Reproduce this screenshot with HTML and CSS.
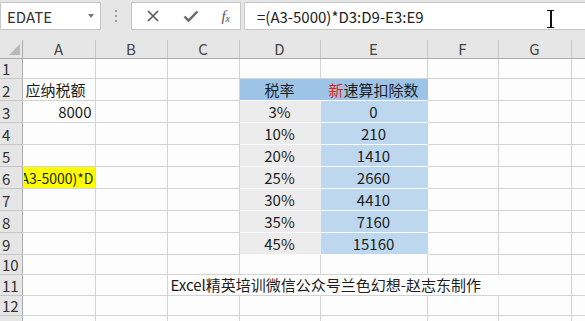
FILE: index.html
```html
<!DOCTYPE html>
<html lang="zh-CN">
<head>
  <meta charset="UTF-8" />
  <title>EDATE</title>
  <link rel="stylesheet" href="styles.css">
</head>
<body>
  <div class="formula-bar">
    <div class="namebox">
      <span class="name">EDATE</span>
      <span class="caret"></span>
    </div>
    <div class="grip"><i></i><i></i><i></i></div>
    <div class="actions">
      <svg class="icon" width="14" height="14" viewBox="0 0 14 14"><path d="M2 2 L12 12 M12 2 L2 12" stroke="#555" stroke-width="1.6" fill="none"/></svg>
      <svg class="icon" width="16" height="14" viewBox="0 0 16 14"><path d="M1.5 7.5 L5.5 11.5 L14.5 2.5" stroke="#666" stroke-width="2.4" fill="none"/></svg>
      <span class="fx">f<sub>x</sub></span>
    </div>
    <div class="formula">
      <span class="formula-text">=(A3-5000)*D3:D9-E3:E9</span>
      <span class="ibeam"></span>
    </div>
  </div>

  <table class="sheet">
    <colgroup>
      <col class="w-rh"><col class="w-a"><col class="w-b"><col class="w-c"><col class="w-d"><col class="w-e"><col class="w-f"><col class="w-g"><col class="w-h">
    </colgroup>
    <tr class="col-head">
      <th class="corner"><span class="tri"></span></th><th>A</th><th>B</th><th>C</th><th>D</th><th>E</th><th>F</th><th>G</th><th></th>
    </tr>
    <tr class="short"><th>1</th><td></td><td></td><td></td><td></td><td></td><td></td><td></td><td></td></tr>
    <tr class="tall"><th>2</th><td>应纳税额</td><td></td><td></td><td class="head-blue center">税率</td><td class="head-blue center"><span class="red">新</span>速算扣除数</td><td></td><td></td><td></td></tr>
    <tr class="tall"><th>3</th><td class="num">8000</td><td></td><td></td><td class="rate">3%</td><td class="quick">0</td><td></td><td></td><td></td></tr>
    <tr class="tall"><th>4</th><td></td><td></td><td></td><td class="rate">10%</td><td class="quick">210</td><td></td><td></td><td></td></tr>
    <tr class="tall"><th>5</th><td></td><td></td><td></td><td class="rate">20%</td><td class="quick">1410</td><td></td><td></td><td></td></tr>
    <tr class="tall"><th>6</th><td class="editing"><div class="clip"><span>=(A3-5000)*D</span></div></td><td></td><td></td><td class="rate">25%</td><td class="quick">2660</td><td></td><td></td><td></td></tr>
    <tr class="tall"><th>7</th><td></td><td></td><td></td><td class="rate">30%</td><td class="quick">4410</td><td></td><td></td><td></td></tr>
    <tr class="tall"><th>8</th><td></td><td></td><td></td><td class="rate">35%</td><td class="quick">7160</td><td></td><td></td><td></td></tr>
    <tr class="tall"><th>9</th><td></td><td></td><td></td><td class="rate">45%</td><td class="quick">15160</td><td></td><td></td><td></td></tr>
    <tr class="short"><th>10</th><td></td><td></td><td></td><td></td><td></td><td></td><td></td><td></td></tr>
    <tr class="mid"><th>11</th><td></td><td></td><td class="note"><span>Excel精英培训微信公众号兰色幻想-赵志东制作</span></td><td class="covered"></td><td class="covered"></td><td class="covered"></td><td></td><td></td></tr>
    <tr class="short"><th>12</th><td></td><td></td><td></td><td></td><td></td><td></td><td></td><td></td></tr>
    <tr class="short"><th>13</th><td></td><td></td><td></td><td></td><td></td><td></td><td></td><td></td></tr>
  </table>
</body>
</html>
```

FILE: styles.css
```css
* {
  margin: 0;
  padding: 0;
  box-sizing: border-box;
}
body {
  width: 585px;
  height: 321px;
  overflow: hidden;
  background: #fdfdfd;
  font-family: "Noto Sans CJK SC", "Noto Sans", sans-serif;
  color: #1e1e1e;
}

/* formula bar */
.formula-bar {
  height: 40px;
  background: #e6e6e6;
  display: flex;
  align-items: flex-start;
  padding-top: 2px;
}
.namebox {
  width: 101px;
  height: 28px;
  background: #fff;
  border: 1px solid #c6c6c6;
  display: flex;
  align-items: center;
  justify-content: space-between;
  padding: 0 6px 0 6px;
}
.name {
  font-size: 15px;
  color: #333;
}
.caret {
  width: 0;
  height: 0;
  border-left: 3.5px solid transparent;
  border-right: 3.5px solid transparent;
  border-top: 4px solid #777;
}
.grip {
  width: 30px;
  height: 28px;
  display: flex;
  flex-direction: column;
  align-items: center;
  justify-content: center;
  gap: 3px;
}
.grip i {
  width: 2px;
  height: 2px;
  background: #a0a0a0;
}
.actions {
  width: 110px;
  height: 28px;
  background: #fff;
  border: 1px solid #c6c6c6;
  display: flex;
  align-items: center;
  justify-content: space-between;
  padding: 0 10px 0 14px;
}
.fx {
  font-family: "Liberation Serif", serif;
  font-style: italic;
  font-size: 15px;
  color: #555;
  line-height: 1;
}
.fx sub {
  font-size: 10px;
  vertical-align: -1px;
}
.formula {
  flex: 1;
  margin-left: 3px;
  height: 28px;
  background: #fff;
  border: 1px solid #c6c6c6;
  border-right: none;
  display: flex;
  align-items: center;
  padding-left: 12px;
  position: relative;
}
.formula-text {
  font-size: 15px;
  color: #222;
}
.ibeam {
  position: absolute;
  left: 302px;
  top: 7px;
  width: 7px;
  height: 18px;
  border-top: 1.5px solid #111;
  border-bottom: 1.5px solid #111;
}
.ibeam::after {
  content: "";
  position: absolute;
  left: 3px;
  top: 0;
  width: 1.5px;
  height: 100%;
  background: #111;
}

/* sheet */
.sheet {
  border-collapse: collapse;
  table-layout: fixed;
  width: 591px;
  font-size: 15px;
}
.w-rh { width: 22px; }
.w-a { width: 73px; }
.w-b { width: 72px; }
.w-c { width: 72px; }
.w-d { width: 81px; }
.w-e { width: 107px; }
.w-f { width: 71px; }
.w-g { width: 73px; }
.w-h { width: 20px; }

.sheet td {
  border: 1px solid #d4d4d4;
  padding: 0 3px 0 3px;
  vertical-align: bottom;
  white-space: nowrap;
  line-height: 20px;
  overflow: hidden;
}
.sheet th {
  background: #e6e6e6;
  font-weight: normal;
  color: #333;
  border: 1px solid #c6c6c6;
  vertical-align: bottom;
  line-height: 19px;
}
.sheet tr > th:first-child {
  text-align: left;
  padding-left: 0;
  border-right: 1px solid #ababab;
  border-left: none;
  text-indent: 2px;
}
.sheet tr.col-head th {
  height: 18px;
  border-top: none;
  border-bottom: 1px solid #ababab;
  color: #444;
  line-height: 17px;
  vertical-align: middle;
  text-align: center;
}
.sheet tr.col-head th.corner {
  position: relative;
}
.tri {
  position: absolute;
  right: 2px;
  bottom: 3px;
  width: 0;
  height: 0;
  border-left: 11px solid transparent;
  border-bottom: 11px solid #b9b9b9;
}
.short td, .short th { height: 19px; }
.mid td, .mid th { height: 20px; }
.tall td, .tall th { height: 22px; }

.center { text-align: center; }
.num { text-align: right; }
.red { color: #e0201c; }

.head-blue {
  background: #9dc3e6;
  border-color: #9dc3e6 !important;
  border-bottom-color: #fff !important;
}
.rate {
  background: #ececec;
  text-align: center;
  border-color: #ececec #ececec #f8f8f8 #d4d4d4 !important;
}
.quick {
  background: #bdd7ee;
  text-align: center;
  border-color: #fff #bdd7ee #fff #bdd7ee !important;
}

.editing {
  background: #ffff00;
  padding: 0 1px !important;
}
.clip {
  display: flex;
  justify-content: flex-end;
  overflow: hidden;
  width: 100%;
  font-size: 14px;
}
.note {
  overflow: visible !important;
  border-right-color: transparent !important;
}
.note span {
  display: inline-block;
  width: 0;
  overflow: visible;
}
.covered {
  border-right-color: transparent !important;
}
```
